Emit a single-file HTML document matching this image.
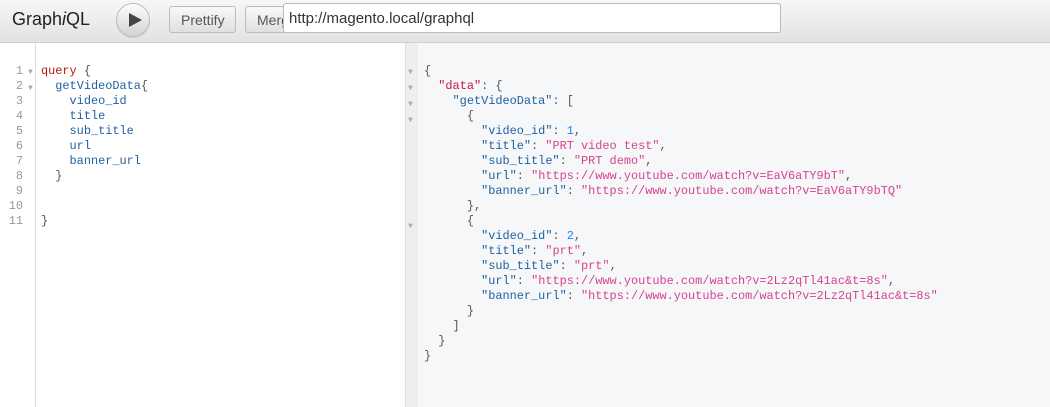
<!DOCTYPE html>
<html><head><style>
*{margin:0;padding:0;box-sizing:border-box}
body{width:1050px;height:407px;overflow:hidden;font-family:"Liberation Sans",sans-serif;background:#fff;position:relative}
.top{position:absolute;left:0;top:0;width:1050px;height:43px;background:linear-gradient(#f7f7f7,#e2e2e2);border-bottom:1px solid #d0d0d0}
.title{position:absolute;left:12px;top:9px;font-size:18px;color:#222}
.run{position:absolute;left:116px;top:3px;width:34px;height:34px;border-radius:50%;background:linear-gradient(#fdfdfd,#d2d3d6);border:1px solid #bbb;box-shadow:0 1px 1px rgba(0,0,0,.1)}
.run:after{content:"";position:absolute;left:12px;top:9px;border-left:13px solid #444;border-top:7.5px solid transparent;border-bottom:7.5px solid transparent}
.btn{position:absolute;top:6px;height:27px;border:1px solid #bbb;border-radius:3px;background:linear-gradient(#f9f9f9,#e0e0e0);font-size:14px;color:#555;padding:5px 11px;overflow:hidden;white-space:nowrap}
.url{position:absolute;left:283px;top:3px;width:498px;height:30px;background:#fff;border:1px solid #bbb;border-radius:3px;font-size:15px;color:#333;padding:6px 5px}
.left{position:absolute;left:0;top:43px;width:405px;height:364px;background:#fff}
.lg{position:absolute;left:0;top:0;width:36px;height:364px;background:#fff;border-right:1px solid #ddd}
.div{position:absolute;left:405px;top:43px;width:13px;height:364px;background:#eeeeee;border-left:1px solid #e0e0e0}
.right{position:absolute;left:418px;top:43px;width:632px;height:364px;background:#f6f7f8}
pre{position:absolute;font-family:"Liberation Mono",monospace;font-size:11.9px;line-height:15px;color:#555}
.n{color:#999}.k{color:#b11a04}.f{color:#1f61a0}.s{color:#d64292}.d{color:#2882f9}.r{color:#c8154f}
.a{color:#aaa;font-size:8px}
</style></head><body>
<div class="top">
<div class="title">Graph<i>i</i>QL</div>
<div class="run"></div>
<div class="btn" style="left:169px;width:67px">Prettify</div>
<div class="btn" style="left:245px;width:45px">Merge</div>
<div class="url">http://magento.local/graphql</div>
</div>
<div class="left"><div class="lg"></div></div>
<div class="div"></div>
<div class="right"></div>
<pre class="n" style="left:2px;width:21px;text-align:right;top:64px">1
2
3
4
5
6
7
8
9
10
11</pre>
<pre style="left:28px;top:64px"><span class="a">▼</span>
<span class="a">▼</span></pre>
<pre style="left:41px;top:64px"><span class="k">query</span> {
  <span class="f">getVideoData</span>{
    <span class="f">video_id</span>
    <span class="f">title</span>
    <span class="f">sub_title</span>
    <span class="f">url</span>
    <span class="f">banner_url</span>
  }


}</pre>
<pre style="left:408px;top:64px"><span class="a">▼</span>
<span class="a">▼</span>
<span class="a">▼</span>
<span class="a">▼</span>






<span class="a">▼</span></pre>
<pre style="left:424px;top:64px">{
  <span class="r">"data"</span>: {
    <span class="f">"getVideoData"</span>: [
      {
        <span class="f">"video_id"</span>: <span class="d">1</span>,
        <span class="f">"title"</span>: <span class="s">"PRT video test"</span>,
        <span class="f">"sub_title"</span>: <span class="s">"PRT demo"</span>,
        <span class="f">"url"</span>: <span class="s">"https://www.youtube.com/watch?v=EaV6aTY9bT"</span>,
        <span class="f">"banner_url"</span>: <span class="s">"https://www.youtube.com/watch?v=EaV6aTY9bTQ"</span>
      },
      {
        <span class="f">"video_id"</span>: <span class="d">2</span>,
        <span class="f">"title"</span>: <span class="s">"prt"</span>,
        <span class="f">"sub_title"</span>: <span class="s">"prt"</span>,
        <span class="f">"url"</span>: <span class="s">"https://www.youtube.com/watch?v=2Lz2qTl41ac&amp;t=8s"</span>,
        <span class="f">"banner_url"</span>: <span class="s">"https://www.youtube.com/watch?v=2Lz2qTl41ac&amp;t=8s"</span>
      }
    ]
  }
}</pre>
</body></html>
